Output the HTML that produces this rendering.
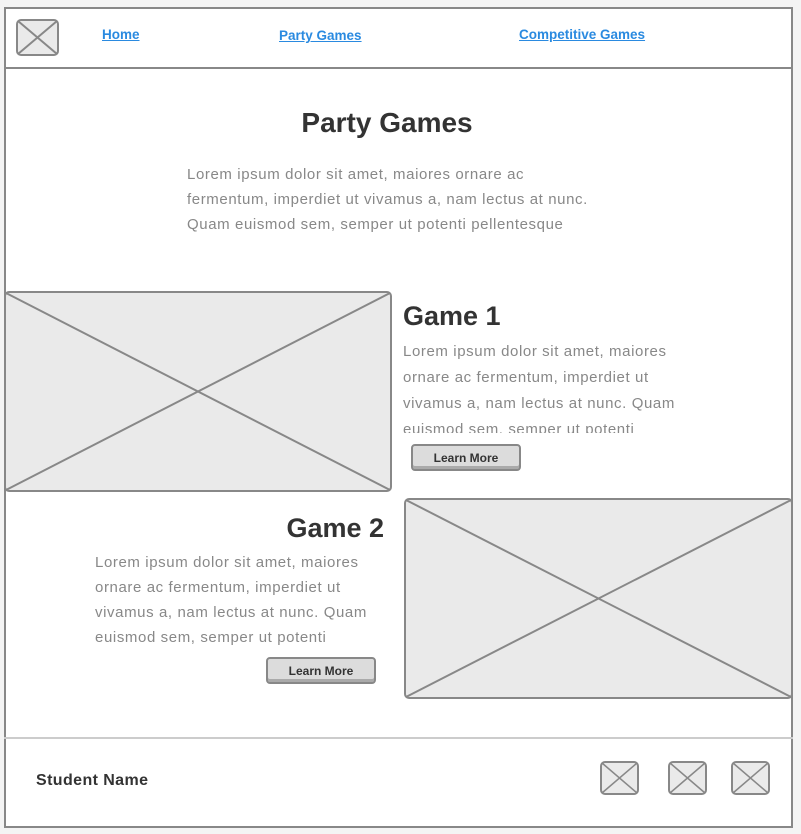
<!DOCTYPE html>
<html><head><meta charset="utf-8"><style>
body{margin:0;width:801px;height:834px;background:#f4f4f4;position:relative;overflow:hidden;font-family:"Liberation Sans",sans-serif}
.a{position:absolute}
.frame{left:4px;top:7px;width:785px;height:817px;border:2px solid #888;background:#fff}
.nav{color:#2a8ae0;text-decoration:underline;font-size:13px;font-weight:bold}
.p{color:#888;font-size:15px;line-height:25px;white-space:nowrap;letter-spacing:0.6px}
h1,h2{margin:0;color:#333;font-weight:bold}
.btn{background:#dcdcdc;border:2px solid #888;border-radius:4px;box-shadow:inset 0 -3px 0 #aaa;font-size:12px;font-weight:bold;color:#333;text-align:center;box-sizing:border-box}
svg{position:absolute}
</style></head><body>
<div class="a frame"></div>
<div class="a" style="left:4px;top:67px;width:789px;height:2px;background:#888"></div>
<div class="a" style="left:4px;top:737px;width:789px;height:2px;background:#ccc"></div>
<svg style="left:16px;top:19px" width="43" height="37"><rect x="1" y="1" width="41" height="35" rx="4" fill="#eaeaea" stroke="#888" stroke-width="2"/><path d="M2 2L41 35M41 2L2 35" stroke="#888" stroke-width="2"/></svg>
<a class="a nav" style="left:102px;top:27px;font-size:13.5px">Home</a>
<a class="a nav" style="left:279px;top:28px;font-size:13.5px">Party Games</a>
<a class="a nav" style="left:519px;top:27px;font-size:13.5px">Competitive Games</a>
<h1 class="a" style="left:0;width:774px;text-align:center;top:107px;font-size:28px">Party Games</h1>
<div class="a p" style="left:187px;top:162px">Lorem ipsum dolor sit amet, maiores ornare ac<br>fermentum, imperdiet ut vivamus a, nam lectus at nunc.<br>Quam euismod sem, semper ut potenti pellentesque</div>
<svg style="left:4px;top:291px" width="388" height="201"><rect x="1" y="1" width="386" height="199" rx="4" fill="#eaeaea" stroke="#888" stroke-width="2"/><path d="M2 2L386 199M386 2L2 199" stroke="#888" stroke-width="2"/></svg>
<h2 class="a" style="left:403px;top:301px;font-size:27px">Game 1</h2>
<div class="a p" style="left:403px;top:339px;height:94px;overflow:hidden;line-height:26px;letter-spacing:0.6px">Lorem ipsum dolor sit amet, maiores<br>ornare ac fermentum, imperdiet ut<br>vivamus a, nam lectus at nunc. Quam<br>euismod sem, semper ut potenti</div>
<div class="a btn" style="left:411px;top:444px;width:110px;height:27px;line-height:24px">Learn More</div>
<h2 class="a" style="left:0;width:384px;text-align:right;top:513px;font-size:27px">Game 2</h2>
<div class="a p" style="left:95px;top:550px;letter-spacing:0.6px">Lorem ipsum dolor sit amet, maiores<br>ornare ac fermentum, imperdiet ut<br>vivamus a, nam lectus at nunc. Quam<br>euismod sem, semper ut potenti</div>
<div class="a btn" style="left:266px;top:657px;width:110px;height:27px;line-height:24px">Learn More</div>
<svg style="left:404px;top:498px" width="389" height="201"><rect x="1" y="1" width="387" height="199" rx="4" fill="#eaeaea" stroke="#888" stroke-width="2"/><path d="M2 2L387 199M387 2L2 199" stroke="#888" stroke-width="2"/></svg>
<div class="a" style="left:36px;top:772px;font-size:16px;font-weight:bold;color:#333;letter-spacing:0.4px">Student Name</div>
<svg style="left:600px;top:761px" width="39" height="34"><rect x="1" y="1" width="37" height="32" rx="4" fill="#eaeaea" stroke="#888" stroke-width="2"/><path d="M2 2L37 32M37 2L2 32" stroke="#888" stroke-width="1.5"/></svg>
<svg style="left:668px;top:761px" width="39" height="34"><rect x="1" y="1" width="37" height="32" rx="4" fill="#eaeaea" stroke="#888" stroke-width="2"/><path d="M2 2L37 32M37 2L2 32" stroke="#888" stroke-width="1.5"/></svg>
<svg style="left:731px;top:761px" width="39" height="34"><rect x="1" y="1" width="37" height="32" rx="4" fill="#eaeaea" stroke="#888" stroke-width="2"/><path d="M2 2L37 32M37 2L2 32" stroke="#888" stroke-width="1.5"/></svg>
</body></html>
